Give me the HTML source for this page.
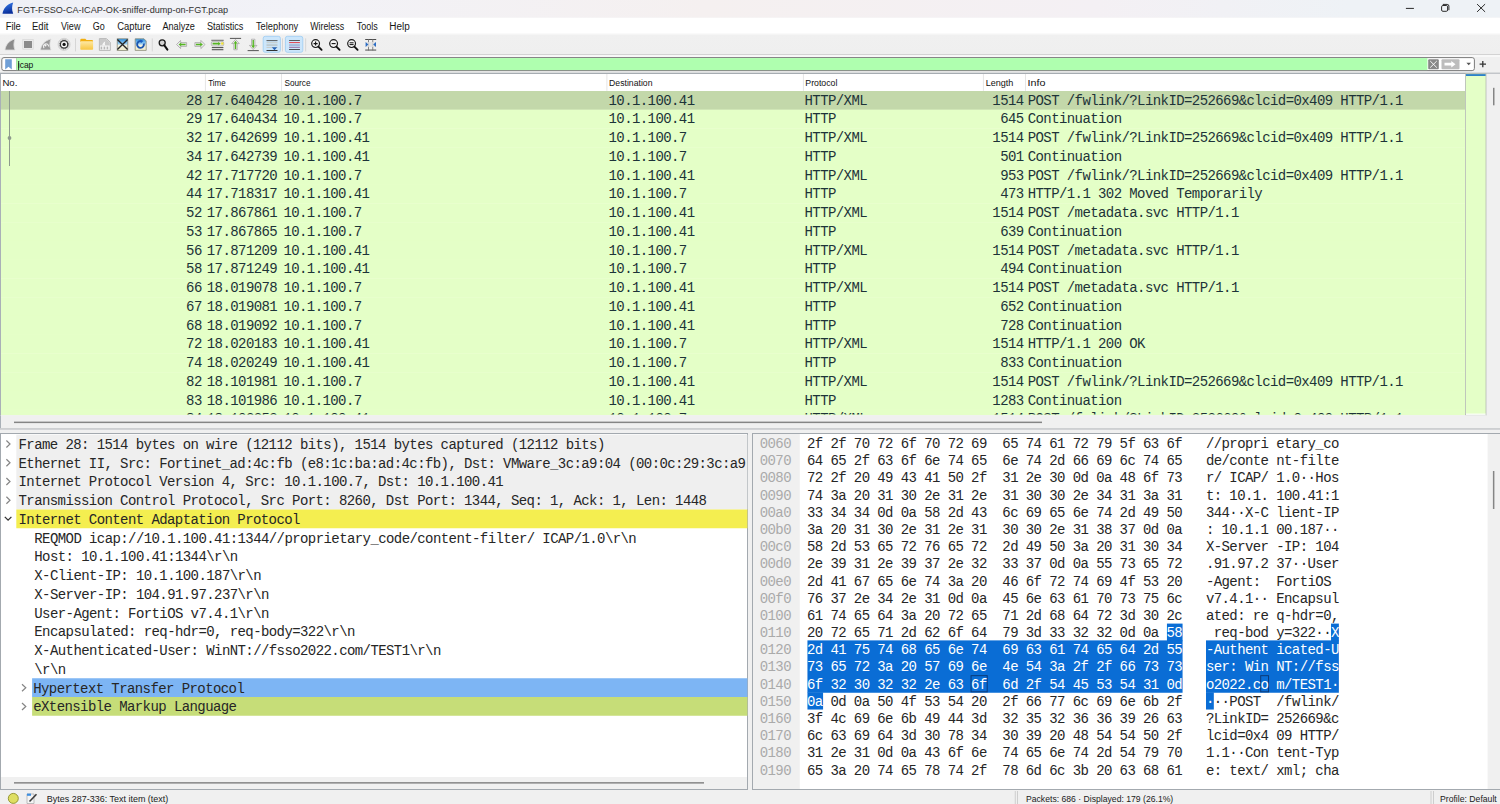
<!DOCTYPE html>
<html><head><meta charset="utf-8"><title>Wireshark</title>
<style>
*{margin:0;padding:0}
html,body{width:1500px;height:804px;overflow:hidden;background:#f0f0f0}
svg{position:absolute;left:0;top:0;display:block}
text{font-family:"Liberation Sans",sans-serif;white-space:pre}
text.m{font-family:"Liberation Mono",monospace;font-size:14px;letter-spacing:-0.585px}
</style></head><body>
<svg width="1500" height="804" viewBox="0 0 1500 804">
<defs>
<linearGradient id="tb" x1="0" y1="0" x2="0" y2="1"><stop offset="0" stop-color="#fbfbfb"/><stop offset="0.08" stop-color="#f0f0f0"/><stop offset="1" stop-color="#efefef"/></linearGradient>
<linearGradient id="ttl" x1="0" y1="0" x2="1" y2="0"><stop offset="0" stop-color="#eff0f6"/><stop offset="0.2" stop-color="#f2f2f7"/><stop offset="0.47" stop-color="#f5f0f0"/><stop offset="0.73" stop-color="#f4f0f4"/><stop offset="0.9" stop-color="#eef2f6"/><stop offset="1" stop-color="#eef2f6"/></linearGradient>
<linearGradient id="fin" x1="0" y1="0" x2="0.3" y2="1"><stop offset="0" stop-color="#3b82f0"/><stop offset="1" stop-color="#0a2f9c"/></linearGradient>
<linearGradient id="fold" x1="0" y1="0" x2="0" y2="1"><stop offset="0" stop-color="#fde9a6"/><stop offset="1" stop-color="#f8c640"/></linearGradient>
<linearGradient id="sky" x1="0" y1="0" x2="0" y2="1"><stop offset="0" stop-color="#2a8fe0"/><stop offset="0.45" stop-color="#9dd0f5"/><stop offset="0.55" stop-color="#f5f3e0"/><stop offset="1" stop-color="#efeccc"/></linearGradient>
<clipPath id="plclip"><rect x="1" y="90.9" width="1464" height="324.4"/></clipPath>
<clipPath id="pltclip"><rect x="1" y="90.9" width="1464" height="323.5"/></clipPath>
<clipPath id="dtclip"><rect x="1" y="434.5" width="746.5" height="342.3"/></clipPath>
<clipPath id="hxclip"><rect x="753" y="434.5" width="734" height="354"/></clipPath>
</defs>

<rect x="0.00" y="0.00" width="1500.00" height="17.70" fill="url(#ttl)" />
<path d="M2.5 13.8 C3.2 9 6.5 4.2 13.2 2.6 C11.8 6 11.6 10 13.2 13.8 Z" fill="url(#fin)"/>
<text x="17.37" y="12.70" font-size="9.2" textLength="210.68" lengthAdjust="spacingAndGlyphs" fill="#303030" >FGT-FSSO-CA-ICAP-OK-sniffer-dump-on-FGT.pcap</text>
<rect x="1405.90" y="7.90" width="8.00" height="1.00" fill="#2b2b2b" />
<rect x="1441.6" y="5.5" width="6" height="5.8" rx="1.3" fill="none" stroke="#2b2b2b" stroke-width="1"/>
<path d="M1442.8 4.4 H1447.2 Q1448.9 4.4 1448.9 6.1 V10.2" fill="none" stroke="#2b2b2b" stroke-width="1"/>
<path d="M1477.1 4.1 L1485.1 11.9 M1485.1 4.1 L1477.1 11.9" stroke="#2b2b2b" stroke-width="1"/>
<rect x="0.00" y="17.70" width="1500.00" height="15.90" fill="#ffffff" />
<text x="5.65" y="29.70" font-size="10.0" textLength="15.19" lengthAdjust="spacingAndGlyphs" fill="#161616" >File</text>
<text x="32.04" y="29.70" font-size="10.0" textLength="16.34" lengthAdjust="spacingAndGlyphs" fill="#161616" >Edit</text>
<text x="60.95" y="29.70" font-size="10.0" textLength="19.54" lengthAdjust="spacingAndGlyphs" fill="#161616" >View</text>
<text x="92.75" y="29.70" font-size="10.0" textLength="12.00" lengthAdjust="spacingAndGlyphs" fill="#161616" >Go</text>
<text x="117.23" y="29.70" font-size="10.0" textLength="33.52" lengthAdjust="spacingAndGlyphs" fill="#161616" >Capture</text>
<text x="162.45" y="29.70" font-size="10.0" textLength="32.48" lengthAdjust="spacingAndGlyphs" fill="#161616" >Analyze</text>
<text x="206.89" y="29.70" font-size="10.0" textLength="36.54" lengthAdjust="spacingAndGlyphs" fill="#161616" >Statistics</text>
<text x="255.97" y="29.70" font-size="10.0" textLength="42.27" lengthAdjust="spacingAndGlyphs" fill="#161616" >Telephony</text>
<text x="310.16" y="29.70" font-size="10.0" textLength="33.94" lengthAdjust="spacingAndGlyphs" fill="#161616" >Wireless</text>
<text x="356.77" y="29.70" font-size="10.0" textLength="21.04" lengthAdjust="spacingAndGlyphs" fill="#161616" >Tools</text>
<text x="389.20" y="29.70" font-size="10.0" textLength="20.51" lengthAdjust="spacingAndGlyphs" fill="#161616" >Help</text>
<rect x="0.00" y="33.60" width="1500.00" height="20.80" fill="url(#tb)" />
<rect x="0.00" y="54.00" width="1500.00" height="1.00" fill="#d3d3d3" />
<rect x="0.00" y="55.10" width="1500.00" height="18.00" fill="#f0f0f0" />
<rect x="0.00" y="55.00" width="1500.00" height="2.00" fill="#f8f8f8" />
<g id="icons"><!-- 1 start capture (gray fin) -->
<path d="M5 50 C5.6 45 9 40.5 15 39 C13.6 42.5 13.4 46.5 15 50 Z" fill="#8b8b8b" stroke="#dcdcdc" stroke-width="0.8"/>
<!-- 2 stop (gray square) -->
<rect x="22.8" y="39.6" width="10.4" height="9.6" fill="#ececec" stroke="#d4d4d4" stroke-width="0.6"/>
<rect x="24" y="41" width="8" height="7" fill="#8b8b8b"/>
<!-- 3 restart (fin w/ arrow) -->
<path d="M40.5 50 C41 45 44.5 40.5 51 39 C49.5 42.5 49.4 46.5 51 50 Z" fill="#9a9a9a" stroke="#dedede" stroke-width="0.8"/>
<path d="M44.2 48.2 A2.6 2.6 0 1 1 48.6 46.4" fill="none" stroke="#f0f0f0" stroke-width="1.1"/>
<circle cx="45.4" cy="45.4" r="1.1" fill="#f6f6f6"/>
<!-- 4 capture options (gear) -->
<circle cx="64.1" cy="44.4" r="6.1" fill="#dcdcdc" stroke="#c8c8c8" stroke-width="0.6"/>
<circle cx="64.1" cy="44.4" r="4.6" fill="#f2f2f2"/>
<circle cx="64.1" cy="44.4" r="3.7" fill="none" stroke="#333" stroke-width="1.3"/>
<circle cx="64.1" cy="44.4" r="4.5" fill="none" stroke="#555" stroke-width="0.8" stroke-dasharray="1 1.36"/>
<circle cx="64.1" cy="44.4" r="2.5" fill="#f8f8f8"/>
<circle cx="64.1" cy="44.4" r="1.6" fill="#111"/>
<!-- separator -->
<rect x="75" y="38.4" width="0.8" height="13" fill="#d0d0d0"/>
<!-- 5 open (folder) -->
<path d="M80.3 40 Q80.3 38.8 81.5 38.8 H85.3 L86.5 40 H92 Q93 40 93 41 V42 H80.3 Z" fill="#f2ae10"/>
<rect x="80.3" y="41.2" width="12.8" height="8.6" rx="0.8" fill="url(#fold)"/>
<!-- 6 save (disabled file) -->
<path d="M99.4 38.6 H106.5 L110.3 42.4 V50.4 H99.4 Z" fill="#f6f6f6" stroke="#b0b0b0" stroke-width="0.9"/>
<path d="M99.9 39.1 H106.2 L109.8 42.6 V45.6 H99.9 Z" fill="#c9c9c9"/>
<path d="M102.2 45.6 C102.6 43.6 103.6 42.2 105.2 41.6 C104.8 43 104.8 44.4 105.2 45.6 Z" fill="#f6f6f6"/>
<rect x="100.6" y="46.6" width="1.6" height="2.8" fill="#b8b8b8"/><rect x="103.6" y="46.6" width="1.6" height="2.8" fill="#b8b8b8"/><rect x="106.6" y="46.6" width="1.6" height="2.8" fill="#b8b8b8"/>
<!-- 7 close file -->
<rect x="117.2" y="38.8" width="10.6" height="11.6" fill="url(#sky)" stroke="#8c8c7a" stroke-width="0.8"/>
<path d="M117.4 39.6 L127.6 49.6 M127.6 39.6 L117.4 49.6" stroke="#262626" stroke-width="1.35"/>
<!-- 8 reload -->
<path d="M135.2 38.8 H144 L146.2 41 V50.4 H135.2 Z" fill="url(#sky)" stroke="#8c8c7a" stroke-width="0.8"/>
<path d="M143.8 43.6 A3.4 3.4 0 1 1 142 41.4" fill="none" stroke="#1d56b0" stroke-width="1.9"/>
<path d="M140.2 39.6 L143.4 41 L140.8 43.2 Z" fill="#1b5fc4"/>
<!-- separator -->
<rect x="151.8" y="38.4" width="0.8" height="13" fill="#d0d0d0"/>
<!-- 9 find -->
<circle cx="162.2" cy="42.8" r="3" fill="#d4d4d4" stroke="#1a1a1a" stroke-width="1.3"/>
<path d="M164.2 45.2 L167.4 49.6" stroke="#111" stroke-width="2" stroke-linecap="round"/>
<!-- 10 back arrow -->
<path d="M176.5 44.5 L180.6 40.4 V42.6 H186.6 V46.4 H180.6 V48.6 Z" fill="#eaeaea" stroke="#a6a6a6" stroke-width="0.8"/>
<path d="M178.6 44.5 L181.2 42.6 V43.8 H185.6 V45.2 H181.2 V46.4 Z" fill="#55b522"/>
<!-- 11 forward arrow -->
<path d="M205 44.5 L200.9 40.4 V42.6 H194.9 V46.4 H200.9 V48.6 Z" fill="#eaeaea" stroke="#a6a6a6" stroke-width="0.8"/>
<path d="M202.9 44.5 L200.3 42.6 V43.8 H195.9 V45.2 H200.3 V46.4 Z" fill="#55b522"/>
<!-- 12 go to packet -->
<rect x="211.3" y="39.8" width="12.4" height="0.9" fill="#555"/>
<rect x="211.3" y="41.4" width="12.4" height="4.6" rx="1.5" fill="#e6e6e6" stroke="#9a9a9a" stroke-width="0.6"/>
<path d="M212.6 42.8 H218.3 V41.8 L220.6 43.7 L218.3 45.6 V44.6 H212.6 Z" fill="#55b522"/>
<rect x="221.2" y="42.4" width="2.2" height="2.2" fill="#f4e32a"/>
<rect x="211.8" y="47.2" width="11.6" height="0.9" fill="#333"/>
<rect x="211.8" y="49.3" width="11.6" height="0.9" fill="#333"/>
<!-- 13 first packet -->
<rect x="229.9" y="37.9" width="11.2" height="0.9" fill="#444"/>
<path d="M235.5 39.4 L239.3 43.6 H237.2 V49.8 H233.8 V43.6 H231.7 Z" fill="#ececec" stroke="#a0a0a0" stroke-width="0.7"/>
<path d="M235.5 40.8 L237.4 43.4 H236.2 V49 H234.8 V43.4 H233.6 Z" fill="#55b522"/>
<!-- 14 last packet -->
<rect x="247.6" y="50.2" width="11.2" height="0.9" fill="#444"/>
<path d="M253.2 49.6 L257 45.4 H254.9 V39.2 H251.5 V45.4 H249.4 Z" fill="#ececec" stroke="#a0a0a0" stroke-width="0.7"/>
<path d="M253.2 48.2 L255.1 45.6 H253.9 V40 H252.5 V45.6 H251.3 Z" fill="#55b522"/>
<!-- 15 auto scroll (pressed) -->
<rect x="263.2" y="36.3" width="17.2" height="16" rx="2" fill="#cce6fb" stroke="#9ccbf3" stroke-width="0.8"/>
<rect x="266.5" y="40.2" width="11" height="0.9" fill="#4a4a4a"/>
<rect x="266.5" y="42.3" width="11" height="0.9" fill="#c8c8c0"/>
<rect x="266.5" y="44.6" width="11" height="0.9" fill="#b0b0a8"/>
<rect x="266.5" y="46.9" width="11" height="0.9" fill="#c8c8c0"/>
<rect x="266.5" y="50" width="11" height="1" fill="#333"/>
<path d="M271.8 47.2 H277.2 L274.5 50.2 Z" fill="#2563b8"/>
<!-- separator -->
<rect x="282.2" y="38.4" width="0.8" height="13" fill="#d0d0d0"/>
<!-- 16 colorize (pressed) -->
<rect x="285.4" y="36.3" width="17.4" height="16" rx="2" fill="#cce6fb" stroke="#9ccbf3" stroke-width="0.8"/>
<rect x="289.1" y="40.1" width="10.8" height="0.9" fill="#4a4a4a"/>
<rect x="289.1" y="42.1" width="10.8" height="1" fill="#e0404a"/>
<rect x="289.1" y="44.4" width="10.8" height="1.3" fill="#90a8cc"/>
<rect x="289.1" y="46.8" width="10.8" height="0.9" fill="#8a5a96"/>
<rect x="289.1" y="49" width="10.8" height="0.9" fill="#3a3a3a"/>
<!-- separator -->
<rect x="305.3" y="38.4" width="0.8" height="13" fill="#d0d0d0"/>
<!-- 17 zoom in -->
<circle cx="315.6" cy="43.6" r="3.9" fill="#f4f4f4" stroke="#1a1a1a" stroke-width="1.2"/>
<path d="M313.6 43.6 H317.6 M315.6 41.6 V45.6" stroke="#111" stroke-width="1.1"/>
<path d="M318.4 46.6 L321.6 49.8" stroke="#111" stroke-width="1.9" stroke-linecap="round"/>
<!-- 18 zoom out -->
<circle cx="333.6" cy="43.6" r="3.9" fill="#f4f4f4" stroke="#1a1a1a" stroke-width="1.2"/>
<path d="M331.6 43.6 H335.6" stroke="#111" stroke-width="1.1"/>
<path d="M336.4 46.6 L339.6 49.8" stroke="#111" stroke-width="1.9" stroke-linecap="round"/>
<!-- 19 normal size -->
<circle cx="351.6" cy="43.6" r="3.9" fill="#f4f4f4" stroke="#1a1a1a" stroke-width="1.2"/>
<path d="M349.6 42.8 H353.6 M349.6 44.6 H353.6" stroke="#111" stroke-width="1"/>
<path d="M354.4 46.6 L357.6 49.8" stroke="#111" stroke-width="1.9" stroke-linecap="round"/>
<!-- 20 resize columns -->
<rect x="365.2" y="39" width="11" height="0.9" fill="#3a3a3a"/>
<rect x="365.2" y="49.6" width="11" height="0.9" fill="#3a3a3a"/>
<rect x="368.2" y="39" width="0.8" height="11.5" fill="#6a6a6a"/>
<rect x="372.4" y="39" width="0.8" height="11.5" fill="#6a6a6a"/>
<rect x="365.6" y="42" width="10.4" height="5" fill="#e0e0e0" opacity="0.8"/>
<path d="M365.6 42 L368.4 44.5 L365.6 47 Z" fill="#2a6cc4"/>
<path d="M376 42 L373.2 44.5 L376 47 Z" fill="#2a6cc4"/>
</g>
<rect x="1.8" y="57.6" width="1472.6" height="13" rx="2.2" fill="#ffffff" stroke="#7a7a7a" stroke-width="1"/>
<rect x="16.40" y="58.10" width="1411.00" height="12.00" fill="#afffaf" />
<rect x="16.10" y="58.10" width="0.60" height="12.00" fill="#8fcf8f" />
<path d="M5.2 59.2 H11.8 V69.6 L8.5 66.8 L5.2 69.6 Z" fill="#6f9fd6"/>
<text x="17.75" y="68.40" font-size="9.6" textLength="15.59" lengthAdjust="spacingAndGlyphs" fill="#111" >icap</text>
<rect x="18.20" y="61.20" width="0.90" height="9.00" fill="#222222" />
<rect x="1428.2" y="59.2" width="10.6" height="10" rx="1" fill="#878787"/>
<path d="M1430.2 61 L1436.8 67.6 M1436.8 61 L1430.2 67.6" stroke="#ffffff" stroke-width="0.9"/>
<rect x="1441.5" y="59.2" width="18" height="10" rx="1" fill="#bdbdbd"/>
<path d="M1444.5 62.8 H1451.3 V60.9 L1455.5 64.2 L1451.3 67.5 V65.6 H1444.5 Z" fill="#ffffff"/>
<path d="M1466.4 62.8 H1471 L1468.7 65.2 Z" fill="#555555"/>
<path d="M1479.6 64.1 H1486 M1482.8 60.9 V67.3" stroke="#333333" stroke-width="1.3"/>
<rect x="0.00" y="73.20" width="1465.50" height="342.10" fill="#ffffff" />
<rect x="0.00" y="72.80" width="1500.00" height="0.90" fill="#828b93" />
<rect x="0.00" y="73.20" width="1.00" height="342.10" fill="#a9b0b7" />
<text x="2.43" y="85.90" font-size="9.2" textLength="14.94" lengthAdjust="spacingAndGlyphs" fill="#111" >No.</text>
<text x="208.20" y="85.90" font-size="9.2" textLength="17.46" lengthAdjust="spacingAndGlyphs" fill="#111" >Time</text>
<text x="284.43" y="85.90" font-size="9.2" textLength="26.07" lengthAdjust="spacingAndGlyphs" fill="#111" >Source</text>
<text x="609.11" y="85.90" font-size="9.2" textLength="43.38" lengthAdjust="spacingAndGlyphs" fill="#111" >Destination</text>
<text x="805.30" y="85.90" font-size="9.2" textLength="32.10" lengthAdjust="spacingAndGlyphs" fill="#111" >Protocol</text>
<text x="985.68" y="85.90" font-size="9.2" textLength="27.70" lengthAdjust="spacingAndGlyphs" fill="#111" >Length</text>
<text x="1027.53" y="85.90" font-size="9.2" textLength="17.93" lengthAdjust="spacingAndGlyphs" fill="#111" >Info</text>
<rect x="204.90" y="74.00" width="1.00" height="16.80" fill="#e5e5e5" />
<rect x="281.00" y="74.00" width="1.00" height="16.80" fill="#e5e5e5" />
<rect x="606.40" y="74.00" width="1.00" height="16.80" fill="#e5e5e5" />
<rect x="802.90" y="74.00" width="1.00" height="16.80" fill="#e5e5e5" />
<rect x="982.90" y="74.00" width="1.00" height="16.80" fill="#e5e5e5" />
<rect x="1025.00" y="74.00" width="1.00" height="16.80" fill="#e5e5e5" />
<g clip-path="url(#plclip)">
<rect x="1.00" y="90.90" width="1464.50" height="19.05" fill="#c3d8aa" />
<rect x="1.00" y="109.65" width="1464.50" height="19.05" fill="#e4ffc7" />
<rect x="1.00" y="128.40" width="1464.50" height="19.05" fill="#e4ffc7" />
<rect x="1.00" y="147.15" width="1464.50" height="19.05" fill="#e4ffc7" />
<rect x="1.00" y="165.90" width="1464.50" height="19.05" fill="#e4ffc7" />
<rect x="1.00" y="184.65" width="1464.50" height="19.05" fill="#e4ffc7" />
<rect x="1.00" y="203.40" width="1464.50" height="19.05" fill="#e4ffc7" />
<rect x="1.00" y="222.15" width="1464.50" height="19.05" fill="#e4ffc7" />
<rect x="1.00" y="240.90" width="1464.50" height="19.05" fill="#e4ffc7" />
<rect x="1.00" y="259.65" width="1464.50" height="19.05" fill="#e4ffc7" />
<rect x="1.00" y="278.40" width="1464.50" height="19.05" fill="#e4ffc7" />
<rect x="1.00" y="297.15" width="1464.50" height="19.05" fill="#e4ffc7" />
<rect x="1.00" y="315.90" width="1464.50" height="19.05" fill="#e4ffc7" />
<rect x="1.00" y="334.65" width="1464.50" height="19.05" fill="#e4ffc7" />
<rect x="1.00" y="353.40" width="1464.50" height="19.05" fill="#e4ffc7" />
<rect x="1.00" y="372.15" width="1464.50" height="19.05" fill="#e4ffc7" />
<rect x="1.00" y="390.90" width="1464.50" height="19.05" fill="#e4ffc7" />
<rect x="1.00" y="409.65" width="1464.50" height="19.05" fill="#e4ffc7" />
</g><g clip-path="url(#pltclip)">
<text class="m" x="186.07" y="104.70" fill="#1d3338" >28</text>
<text class="m" x="206.80" y="104.70" fill="#1d3338" >17.640428</text>
<text class="m" x="283.40" y="104.70" fill="#1d3338" >10.1.100.7</text>
<text class="m" x="608.50" y="104.70" fill="#1d3338" >10.1.100.41</text>
<text class="m" x="804.50" y="104.70" fill="#1d3338" >HTTP/XML</text>
<text class="m" x="992.34" y="104.70" fill="#1d3338" >1514</text>
<text class="m" x="1027.70" y="104.70" fill="#1d3338" >POST /fwlink/?LinkID=252669&amp;clcid=0x409 HTTP/1.1</text>
<text class="m" x="186.07" y="123.45" fill="#1d3338" >29</text>
<text class="m" x="206.80" y="123.45" fill="#1d3338" >17.640434</text>
<text class="m" x="283.40" y="123.45" fill="#1d3338" >10.1.100.7</text>
<text class="m" x="608.50" y="123.45" fill="#1d3338" >10.1.100.41</text>
<text class="m" x="804.50" y="123.45" fill="#1d3338" >HTTP</text>
<text class="m" x="1000.15" y="123.45" fill="#1d3338" >645</text>
<text class="m" x="1027.70" y="123.45" fill="#1d3338" >Continuation</text>
<text class="m" x="186.07" y="142.20" fill="#1d3338" >32</text>
<text class="m" x="206.80" y="142.20" fill="#1d3338" >17.642699</text>
<text class="m" x="283.40" y="142.20" fill="#1d3338" >10.1.100.41</text>
<text class="m" x="608.50" y="142.20" fill="#1d3338" >10.1.100.7</text>
<text class="m" x="804.50" y="142.20" fill="#1d3338" >HTTP/XML</text>
<text class="m" x="992.34" y="142.20" fill="#1d3338" >1514</text>
<text class="m" x="1027.70" y="142.20" fill="#1d3338" >POST /fwlink/?LinkID=252669&amp;clcid=0x409 HTTP/1.1</text>
<text class="m" x="186.07" y="160.95" fill="#1d3338" >34</text>
<text class="m" x="206.80" y="160.95" fill="#1d3338" >17.642739</text>
<text class="m" x="283.40" y="160.95" fill="#1d3338" >10.1.100.41</text>
<text class="m" x="608.50" y="160.95" fill="#1d3338" >10.1.100.7</text>
<text class="m" x="804.50" y="160.95" fill="#1d3338" >HTTP</text>
<text class="m" x="1000.15" y="160.95" fill="#1d3338" >501</text>
<text class="m" x="1027.70" y="160.95" fill="#1d3338" >Continuation</text>
<text class="m" x="186.07" y="179.70" fill="#1d3338" >42</text>
<text class="m" x="206.80" y="179.70" fill="#1d3338" >17.717720</text>
<text class="m" x="283.40" y="179.70" fill="#1d3338" >10.1.100.7</text>
<text class="m" x="608.50" y="179.70" fill="#1d3338" >10.1.100.41</text>
<text class="m" x="804.50" y="179.70" fill="#1d3338" >HTTP/XML</text>
<text class="m" x="1000.15" y="179.70" fill="#1d3338" >953</text>
<text class="m" x="1027.70" y="179.70" fill="#1d3338" >POST /fwlink/?LinkID=252669&amp;clcid=0x409 HTTP/1.1</text>
<text class="m" x="186.07" y="198.45" fill="#1d3338" >44</text>
<text class="m" x="206.80" y="198.45" fill="#1d3338" >17.718317</text>
<text class="m" x="283.40" y="198.45" fill="#1d3338" >10.1.100.41</text>
<text class="m" x="608.50" y="198.45" fill="#1d3338" >10.1.100.7</text>
<text class="m" x="804.50" y="198.45" fill="#1d3338" >HTTP</text>
<text class="m" x="1000.15" y="198.45" fill="#1d3338" >473</text>
<text class="m" x="1027.70" y="198.45" fill="#1d3338" >HTTP/1.1 302 Moved Temporarily</text>
<text class="m" x="186.07" y="217.20" fill="#1d3338" >52</text>
<text class="m" x="206.80" y="217.20" fill="#1d3338" >17.867861</text>
<text class="m" x="283.40" y="217.20" fill="#1d3338" >10.1.100.7</text>
<text class="m" x="608.50" y="217.20" fill="#1d3338" >10.1.100.41</text>
<text class="m" x="804.50" y="217.20" fill="#1d3338" >HTTP/XML</text>
<text class="m" x="992.34" y="217.20" fill="#1d3338" >1514</text>
<text class="m" x="1027.70" y="217.20" fill="#1d3338" >POST /metadata.svc HTTP/1.1</text>
<text class="m" x="186.07" y="235.95" fill="#1d3338" >53</text>
<text class="m" x="206.80" y="235.95" fill="#1d3338" >17.867865</text>
<text class="m" x="283.40" y="235.95" fill="#1d3338" >10.1.100.7</text>
<text class="m" x="608.50" y="235.95" fill="#1d3338" >10.1.100.41</text>
<text class="m" x="804.50" y="235.95" fill="#1d3338" >HTTP</text>
<text class="m" x="1000.15" y="235.95" fill="#1d3338" >639</text>
<text class="m" x="1027.70" y="235.95" fill="#1d3338" >Continuation</text>
<text class="m" x="186.07" y="254.70" fill="#1d3338" >56</text>
<text class="m" x="206.80" y="254.70" fill="#1d3338" >17.871209</text>
<text class="m" x="283.40" y="254.70" fill="#1d3338" >10.1.100.41</text>
<text class="m" x="608.50" y="254.70" fill="#1d3338" >10.1.100.7</text>
<text class="m" x="804.50" y="254.70" fill="#1d3338" >HTTP/XML</text>
<text class="m" x="992.34" y="254.70" fill="#1d3338" >1514</text>
<text class="m" x="1027.70" y="254.70" fill="#1d3338" >POST /metadata.svc HTTP/1.1</text>
<text class="m" x="186.07" y="273.45" fill="#1d3338" >58</text>
<text class="m" x="206.80" y="273.45" fill="#1d3338" >17.871249</text>
<text class="m" x="283.40" y="273.45" fill="#1d3338" >10.1.100.41</text>
<text class="m" x="608.50" y="273.45" fill="#1d3338" >10.1.100.7</text>
<text class="m" x="804.50" y="273.45" fill="#1d3338" >HTTP</text>
<text class="m" x="1000.15" y="273.45" fill="#1d3338" >494</text>
<text class="m" x="1027.70" y="273.45" fill="#1d3338" >Continuation</text>
<text class="m" x="186.07" y="292.20" fill="#1d3338" >66</text>
<text class="m" x="206.80" y="292.20" fill="#1d3338" >18.019078</text>
<text class="m" x="283.40" y="292.20" fill="#1d3338" >10.1.100.7</text>
<text class="m" x="608.50" y="292.20" fill="#1d3338" >10.1.100.41</text>
<text class="m" x="804.50" y="292.20" fill="#1d3338" >HTTP/XML</text>
<text class="m" x="992.34" y="292.20" fill="#1d3338" >1514</text>
<text class="m" x="1027.70" y="292.20" fill="#1d3338" >POST /metadata.svc HTTP/1.1</text>
<text class="m" x="186.07" y="310.95" fill="#1d3338" >67</text>
<text class="m" x="206.80" y="310.95" fill="#1d3338" >18.019081</text>
<text class="m" x="283.40" y="310.95" fill="#1d3338" >10.1.100.7</text>
<text class="m" x="608.50" y="310.95" fill="#1d3338" >10.1.100.41</text>
<text class="m" x="804.50" y="310.95" fill="#1d3338" >HTTP</text>
<text class="m" x="1000.15" y="310.95" fill="#1d3338" >652</text>
<text class="m" x="1027.70" y="310.95" fill="#1d3338" >Continuation</text>
<text class="m" x="186.07" y="329.70" fill="#1d3338" >68</text>
<text class="m" x="206.80" y="329.70" fill="#1d3338" >18.019092</text>
<text class="m" x="283.40" y="329.70" fill="#1d3338" >10.1.100.7</text>
<text class="m" x="608.50" y="329.70" fill="#1d3338" >10.1.100.41</text>
<text class="m" x="804.50" y="329.70" fill="#1d3338" >HTTP</text>
<text class="m" x="1000.15" y="329.70" fill="#1d3338" >728</text>
<text class="m" x="1027.70" y="329.70" fill="#1d3338" >Continuation</text>
<text class="m" x="186.07" y="348.45" fill="#1d3338" >72</text>
<text class="m" x="206.80" y="348.45" fill="#1d3338" >18.020183</text>
<text class="m" x="283.40" y="348.45" fill="#1d3338" >10.1.100.41</text>
<text class="m" x="608.50" y="348.45" fill="#1d3338" >10.1.100.7</text>
<text class="m" x="804.50" y="348.45" fill="#1d3338" >HTTP/XML</text>
<text class="m" x="992.34" y="348.45" fill="#1d3338" >1514</text>
<text class="m" x="1027.70" y="348.45" fill="#1d3338" >HTTP/1.1 200 OK</text>
<text class="m" x="186.07" y="367.20" fill="#1d3338" >74</text>
<text class="m" x="206.80" y="367.20" fill="#1d3338" >18.020249</text>
<text class="m" x="283.40" y="367.20" fill="#1d3338" >10.1.100.41</text>
<text class="m" x="608.50" y="367.20" fill="#1d3338" >10.1.100.7</text>
<text class="m" x="804.50" y="367.20" fill="#1d3338" >HTTP</text>
<text class="m" x="1000.15" y="367.20" fill="#1d3338" >833</text>
<text class="m" x="1027.70" y="367.20" fill="#1d3338" >Continuation</text>
<text class="m" x="186.07" y="385.95" fill="#1d3338" >82</text>
<text class="m" x="206.80" y="385.95" fill="#1d3338" >18.101981</text>
<text class="m" x="283.40" y="385.95" fill="#1d3338" >10.1.100.7</text>
<text class="m" x="608.50" y="385.95" fill="#1d3338" >10.1.100.41</text>
<text class="m" x="804.50" y="385.95" fill="#1d3338" >HTTP/XML</text>
<text class="m" x="992.34" y="385.95" fill="#1d3338" >1514</text>
<text class="m" x="1027.70" y="385.95" fill="#1d3338" >POST /fwlink/?LinkID=252669&amp;clcid=0x409 HTTP/1.1</text>
<text class="m" x="186.07" y="404.70" fill="#1d3338" >83</text>
<text class="m" x="206.80" y="404.70" fill="#1d3338" >18.101986</text>
<text class="m" x="283.40" y="404.70" fill="#1d3338" >10.1.100.7</text>
<text class="m" x="608.50" y="404.70" fill="#1d3338" >10.1.100.41</text>
<text class="m" x="804.50" y="404.70" fill="#1d3338" >HTTP</text>
<text class="m" x="992.34" y="404.70" fill="#1d3338" >1283</text>
<text class="m" x="1027.70" y="404.70" fill="#1d3338" >Continuation</text>
<text class="m" x="186.07" y="423.45" fill="#1d3338" >84</text>
<text class="m" x="206.80" y="423.45" fill="#1d3338" >18.102253</text>
<text class="m" x="283.40" y="423.45" fill="#1d3338" >10.1.100.41</text>
<text class="m" x="608.50" y="423.45" fill="#1d3338" >10.1.100.7</text>
<text class="m" x="804.50" y="423.45" fill="#1d3338" >HTTP/XML</text>
<text class="m" x="992.34" y="423.45" fill="#1d3338" >1514</text>
<text class="m" x="1027.70" y="423.45" fill="#1d3338" >POST /fwlink/?LinkID=252669&amp;clcid=0x409 HTTP/1.1</text>
</g>
<rect x="9.00" y="91.00" width="1.00" height="75.00" fill="#8d9a8d" />
<circle cx="9.5" cy="138" r="1.9" fill="#8d9a8d"/>
<rect x="1486.00" y="73.60" width="14.00" height="355.00" fill="#f0f0f0" />
<rect x="1465.5" y="73.5" width="20.5" height="341.5" fill="#e4ffc7" stroke="#b4b8b4" stroke-width="0.8"/>
<rect x="1466.00" y="74.20" width="19.60" height="1.70" fill="#1873c8" />
<rect x="1466.00" y="413.60" width="19.60" height="1.20" fill="#ffffff" />
<rect x="1493.00" y="87.80" width="1.50" height="17.50" fill="#858585" />
<rect x="0.00" y="415.30" width="1486.00" height="13.00" fill="#f0f0f0" />
<rect x="0.00" y="415.30" width="1.00" height="13.00" fill="#a9b0b7" />
<rect x="14.00" y="421.60" width="1028.00" height="1.50" fill="#858585" />
<rect x="0.00" y="428.20" width="1500.00" height="1.50" fill="#c5c7ca" />
<rect x="0.5" y="433.5" width="747" height="356" fill="#ffffff" stroke="#a3a9af" stroke-width="1"/>
<rect x="1.00" y="777.00" width="746.00" height="12.00" fill="#f0f0f0" />
<rect x="14.00" y="782.10" width="690.00" height="1.50" fill="#858585" />
<g clip-path="url(#dtclip)">
<rect x="16.30" y="434.30" width="731.50" height="75.20" fill="#efefef" />
<text class="m" x="18.50" y="448.90" fill="#262626" >Frame 28: 1514 bytes on wire (12112 bits), 1514 bytes captured (12112 bits)</text>
<path d="M6.4 440.50 L10 444.00 L6.4 447.50" fill="none" stroke="#858585" stroke-width="1.2"/>
<text class="m" x="18.50" y="467.65" fill="#262626" >Ethernet II, Src: Fortinet_ad:4c:fb (e8:1c:ba:ad:4c:fb), Dst: VMware_3c:a9:04 (00:0c:29:3c:a9:04)</text>
<path d="M6.4 459.25 L10 462.75 L6.4 466.25" fill="none" stroke="#858585" stroke-width="1.2"/>
<text class="m" x="18.50" y="486.40" fill="#262626" >Internet Protocol Version 4, Src: 10.1.100.7, Dst: 10.1.100.41</text>
<path d="M6.4 478.00 L10 481.50 L6.4 485.00" fill="none" stroke="#858585" stroke-width="1.2"/>
<text class="m" x="18.50" y="505.15" fill="#262626" >Transmission Control Protocol, Src Port: 8260, Dst Port: 1344, Seq: 1, Ack: 1, Len: 1448</text>
<path d="M6.4 496.75 L10 500.25 L6.4 503.75" fill="none" stroke="#858585" stroke-width="1.2"/>
<rect x="16.30" y="509.50" width="731.50" height="18.75" fill="#f4ee50" />
<text class="m" x="18.50" y="523.90" fill="#262626" >Internet Content Adaptation Protocol</text>
<path d="M4.8 516.90 L8.1 520.10 L11.4 516.90" fill="none" stroke="#333" stroke-width="1.3"/>
<text class="m" x="34.30" y="542.65" fill="#262626" >REQMOD icap://10.1.100.41:1344//proprietary_code/content-filter/ ICAP/1.0\r\n</text>
<text class="m" x="34.30" y="561.40" fill="#262626" >Host: 10.1.100.41:1344\r\n</text>
<text class="m" x="34.30" y="580.15" fill="#262626" >X-Client-IP: 10.1.100.187\r\n</text>
<text class="m" x="34.30" y="598.90" fill="#262626" >X-Server-IP: 104.91.97.237\r\n</text>
<text class="m" x="34.30" y="617.65" fill="#262626" >User-Agent: FortiOS v7.4.1\r\n</text>
<text class="m" x="34.30" y="636.40" fill="#262626" >Encapsulated: req-hdr=0, req-body=322\r\n</text>
<text class="m" x="34.30" y="655.15" fill="#262626" >X-Authenticated-User: WinNT://fsso2022.com/TEST1\r\n</text>
<text class="m" x="34.30" y="673.90" fill="#262626" >\r\n</text>
<rect x="32.10" y="678.25" width="715.70" height="18.75" fill="#7db5f4" />
<text class="m" x="33.20" y="692.65" fill="#262626" >Hypertext Transfer Protocol</text>
<path d="M22 684.25 L25.8 687.75 L22 691.25" fill="none" stroke="#858585" stroke-width="1.2"/>
<rect x="32.10" y="697.00" width="715.70" height="18.75" fill="#c6dd78" />
<text class="m" x="33.20" y="711.40" fill="#262626" >eXtensible Markup Language</text>
<path d="M22 703.00 L25.8 706.50 L22 710.00" fill="none" stroke="#858585" stroke-width="1.2"/>
</g>
<rect x="752.5" y="433.5" width="760" height="356" fill="#ffffff" stroke="#a3a9af" stroke-width="1"/>
<rect x="753.00" y="434.00" width="46.80" height="355.00" fill="#f0f0f0" />
<rect x="1166.94" y="623.59" width="15.63" height="17.69" fill="#0a6dd5" />
<rect x="807.45" y="640.38" width="375.12" height="52.37" fill="#0a6dd5" />
<rect x="807.45" y="692.35" width="15.63" height="17.19" fill="#0a6dd5" />
<rect x="1331.04" y="623.59" width="7.82" height="17.69" fill="#0a6dd5" />
<rect x="1206.00" y="640.38" width="132.86" height="52.37" fill="#0a6dd5" />
<rect x="1206.00" y="692.35" width="7.82" height="17.19" fill="#0a6dd5" />
<rect x="971.07" y="675.66" width="16.13" height="16.19" fill="none" stroke="#0a3a78" stroke-width="1"/>
<rect x="1260.70" y="675.66" width="7.82" height="16.19" fill="none" stroke="#0a3a78" stroke-width="1"/>
<g clip-path="url(#hxclip)">
<text class="m" x="759.70" y="448.00" fill="#aaaaaa" >0060</text>
<text class="m" x="806.95" y="448.00" fill="#262626" >2f 2f 70 72 6f 70 72 69  65 74 61 72 79 5f 63 6f</text>
<text class="m" x="1205.90" y="448.00" fill="#262626" >//propri etary_co</text>
<text class="m" x="759.70" y="465.19" fill="#aaaaaa" >0070</text>
<text class="m" x="806.95" y="465.19" fill="#262626" >64 65 2f 63 6f 6e 74 65  6e 74 2d 66 69 6c 74 65</text>
<text class="m" x="1205.90" y="465.19" fill="#262626" >de/conte nt-filte</text>
<text class="m" x="759.70" y="482.38" fill="#aaaaaa" >0080</text>
<text class="m" x="806.95" y="482.38" fill="#262626" >72 2f 20 49 43 41 50 2f  31 2e 30 0d 0a 48 6f 73</text>
<text class="m" x="1205.90" y="482.38" fill="#262626" >r/ ICAP/ 1.0··Hos</text>
<text class="m" x="759.70" y="499.57" fill="#aaaaaa" >0090</text>
<text class="m" x="806.95" y="499.57" fill="#262626" >74 3a 20 31 30 2e 31 2e  31 30 30 2e 34 31 3a 31</text>
<text class="m" x="1205.90" y="499.57" fill="#262626" >t: 10.1. 100.41:1</text>
<text class="m" x="759.70" y="516.76" fill="#aaaaaa" >00a0</text>
<text class="m" x="806.95" y="516.76" fill="#262626" >33 34 34 0d 0a 58 2d 43  6c 69 65 6e 74 2d 49 50</text>
<text class="m" x="1205.90" y="516.76" fill="#262626" >344··X-C lient-IP</text>
<text class="m" x="759.70" y="533.95" fill="#aaaaaa" >00b0</text>
<text class="m" x="806.95" y="533.95" fill="#262626" >3a 20 31 30 2e 31 2e 31  30 30 2e 31 38 37 0d 0a</text>
<text class="m" x="1205.90" y="533.95" fill="#262626" >: 10.1.1 00.187··</text>
<text class="m" x="759.70" y="551.14" fill="#aaaaaa" >00c0</text>
<text class="m" x="806.95" y="551.14" fill="#262626" >58 2d 53 65 72 76 65 72  2d 49 50 3a 20 31 30 34</text>
<text class="m" x="1205.90" y="551.14" fill="#262626" >X-Server -IP: 104</text>
<text class="m" x="759.70" y="568.33" fill="#aaaaaa" >00d0</text>
<text class="m" x="806.95" y="568.33" fill="#262626" >2e 39 31 2e 39 37 2e 32  33 37 0d 0a 55 73 65 72</text>
<text class="m" x="1205.90" y="568.33" fill="#262626" >.91.97.2 37··User</text>
<text class="m" x="759.70" y="585.52" fill="#aaaaaa" >00e0</text>
<text class="m" x="806.95" y="585.52" fill="#262626" >2d 41 67 65 6e 74 3a 20  46 6f 72 74 69 4f 53 20</text>
<text class="m" x="1205.90" y="585.52" fill="#262626" >-Agent:  FortiOS </text>
<text class="m" x="759.70" y="602.71" fill="#aaaaaa" >00f0</text>
<text class="m" x="806.95" y="602.71" fill="#262626" >76 37 2e 34 2e 31 0d 0a  45 6e 63 61 70 73 75 6c</text>
<text class="m" x="1205.90" y="602.71" fill="#262626" >v7.4.1·· Encapsul</text>
<text class="m" x="759.70" y="619.90" fill="#aaaaaa" >0100</text>
<text class="m" x="806.95" y="619.90" fill="#262626" >61 74 65 64 3a 20 72 65  71 2d 68 64 72 3d 30 2c</text>
<text class="m" x="1205.90" y="619.90" fill="#262626" >ated: re q-hdr=0,</text>
<text class="m" x="759.70" y="637.09" fill="#aaaaaa" >0110</text>
<text class="m" x="806.95" y="637.09" fill="#262626" >20 72 65 71 2d 62 6f 64  79 3d 33 32 32 0d 0a <tspan fill="#ffffff">58</tspan></text>
<text class="m" x="1205.90" y="637.09" fill="#262626" > req-bod y=322··<tspan fill="#ffffff">X</tspan></text>
<text class="m" x="759.70" y="654.28" fill="#aaaaaa" >0120</text>
<text class="m" x="806.95" y="654.28" fill="#262626" ><tspan fill="#ffffff">2d 41 75 74 68 65 6e 74  69 63 61 74 65 64 2d 55</tspan></text>
<text class="m" x="1205.90" y="654.28" fill="#262626" ><tspan fill="#ffffff">-Authent icated-U</tspan></text>
<text class="m" x="759.70" y="671.47" fill="#aaaaaa" >0130</text>
<text class="m" x="806.95" y="671.47" fill="#262626" ><tspan fill="#ffffff">73 65 72 3a 20 57 69 6e  4e 54 3a 2f 2f 66 73 73</tspan></text>
<text class="m" x="1205.90" y="671.47" fill="#262626" ><tspan fill="#ffffff">ser: Win NT://fss</tspan></text>
<text class="m" x="759.70" y="688.66" fill="#aaaaaa" >0140</text>
<text class="m" x="806.95" y="688.66" fill="#262626" ><tspan fill="#ffffff">6f 32 30 32 32 2e 63 6f  6d 2f 54 45 53 54 31 0d</tspan></text>
<text class="m" x="1205.90" y="688.66" fill="#262626" ><tspan fill="#ffffff">o2022.co m/TEST1·</tspan></text>
<text class="m" x="759.70" y="705.85" fill="#aaaaaa" >0150</text>
<text class="m" x="806.95" y="705.85" fill="#262626" ><tspan fill="#ffffff">0a</tspan> 0d 0a 50 4f 53 54 20  2f 66 77 6c 69 6e 6b 2f</text>
<text class="m" x="1205.90" y="705.85" fill="#262626" ><tspan fill="#ffffff">·</tspan>··POST  /fwlink/</text>
<text class="m" x="759.70" y="723.04" fill="#aaaaaa" >0160</text>
<text class="m" x="806.95" y="723.04" fill="#262626" >3f 4c 69 6e 6b 49 44 3d  32 35 32 36 36 39 26 63</text>
<text class="m" x="1205.90" y="723.04" fill="#262626" >?LinkID= 252669&amp;c</text>
<text class="m" x="759.70" y="740.23" fill="#aaaaaa" >0170</text>
<text class="m" x="806.95" y="740.23" fill="#262626" >6c 63 69 64 3d 30 78 34  30 39 20 48 54 54 50 2f</text>
<text class="m" x="1205.90" y="740.23" fill="#262626" >lcid=0x4 09 HTTP/</text>
<text class="m" x="759.70" y="757.42" fill="#aaaaaa" >0180</text>
<text class="m" x="806.95" y="757.42" fill="#262626" >31 2e 31 0d 0a 43 6f 6e  74 65 6e 74 2d 54 79 70</text>
<text class="m" x="1205.90" y="757.42" fill="#262626" >1.1··Con tent-Typ</text>
<text class="m" x="759.70" y="774.61" fill="#aaaaaa" >0190</text>
<text class="m" x="806.95" y="774.61" fill="#262626" >65 3a 20 74 65 78 74 2f  78 6d 6c 3b 20 63 68 61</text>
<text class="m" x="1205.90" y="774.61" fill="#262626" >e: text/ xml; cha</text>
</g>
<rect x="1487.60" y="434.00" width="12.40" height="355.00" fill="#f0f0f0" />
<rect x="1492.90" y="471.00" width="1.50" height="38.00" fill="#858585" />
<rect x="0.00" y="790.00" width="1500.00" height="14.00" fill="#f0f0f0" />
<circle cx="13.3" cy="798.4" r="5" fill="#dede62" stroke="#8f8f28" stroke-width="0.9"/>
<path d="M27 794 H34 V803.5 H27 Z" fill="#f4f4f4" stroke="#9a9a9a" stroke-width="0.6"/>
<rect x="27.00" y="793.60" width="4.00" height="2.20" fill="#3d8fe0" />
<path d="M29.5 801.5 L36.5 794.2" stroke="#3a3a3a" stroke-width="1.6"/>
<text x="46.88" y="802.00" font-size="8.8" textLength="121.38" lengthAdjust="spacingAndGlyphs" fill="#1a1a1a" >Bytes 287-336: Text item (text)</text>
<rect x="1014.80" y="791.00" width="0.80" height="13.00" fill="#c6c6c6" />
<rect x="1017.20" y="791.00" width="0.80" height="13.00" fill="#c6c6c6" />
<text x="1026.01" y="802.00" font-size="8.8" textLength="147.25" lengthAdjust="spacingAndGlyphs" fill="#1a1a1a" >Packets: 686 · Displayed: 179 (26.1%)</text>
<rect x="1430.60" y="791.00" width="0.80" height="13.00" fill="#c6c6c6" />
<rect x="1433.00" y="791.00" width="0.80" height="13.00" fill="#c6c6c6" />
<text x="1440.01" y="802.00" font-size="8.8" textLength="56.77" lengthAdjust="spacingAndGlyphs" fill="#1a1a1a" >Profile: Default</text>
</svg></body></html>
